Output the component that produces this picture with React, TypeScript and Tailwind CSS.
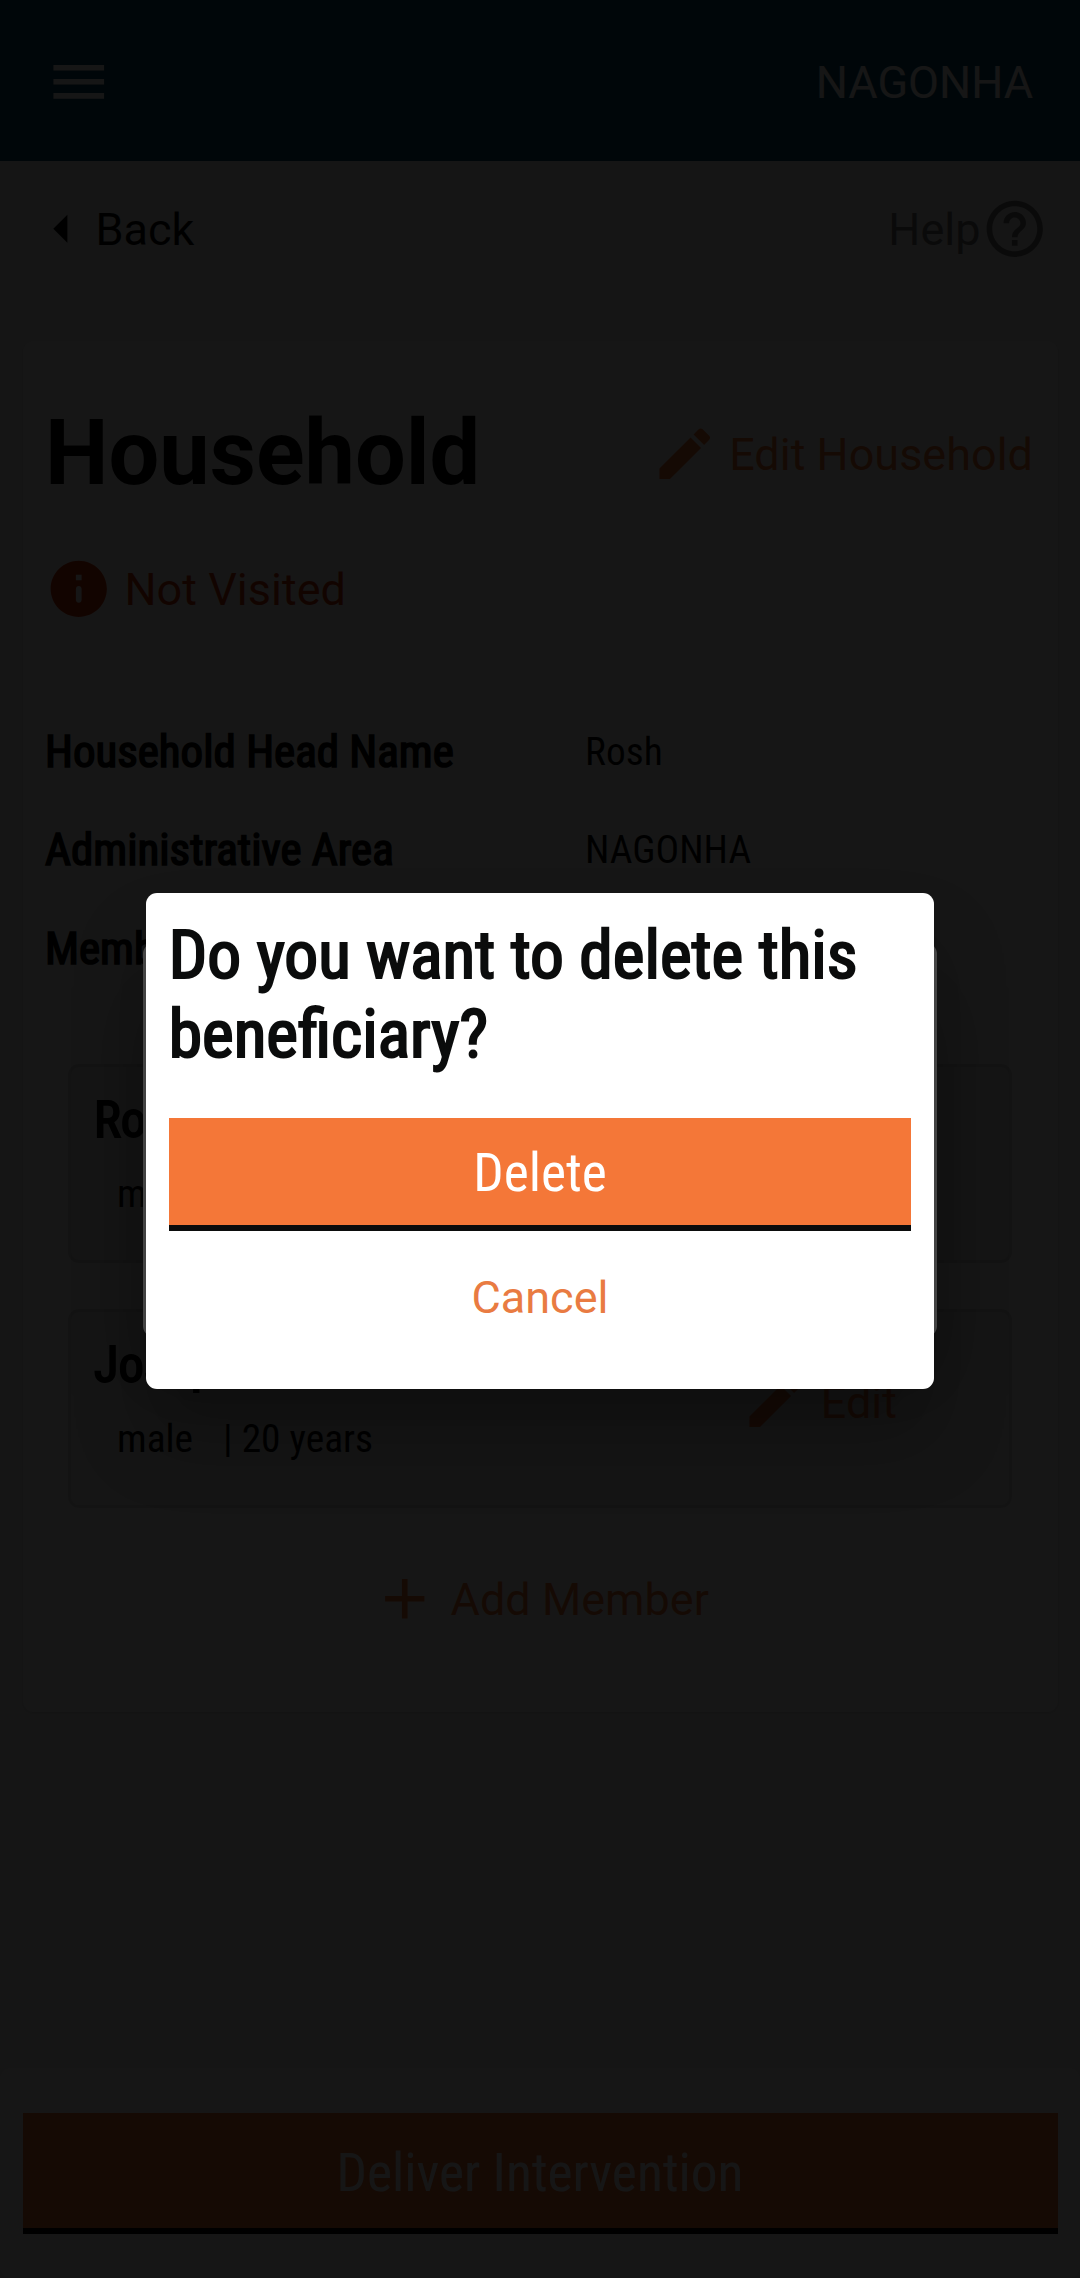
import type { ReactNode } from "react";

const ICONS = {
  menu: "M3 18h18v-2H3v2zm0-5h18v-2H3v2zm0-7v2h18V6H3z",
  back: "M14 7l-5 5 5 5V7z",
  help: "M11 18h2v-2h-2v2zm1-16C6.48 2 2 6.48 2 12s4.48 10 10 10 10-4.48 10-10S17.52 2 12 2zm0 18c-4.41 0-8-3.59-8-8s3.59-8 8-8 8 3.59 8 8-3.59 8-8 8zm0-14c-2.21 0-4 1.79-4 4h2c0-1.1.9-2 2-2s2 .9 2 2c0 2-3 1.75-3 5h2c0-2.25 3-2.5 3-5 0-2.21-1.79-4-4-4z",
  edit: "M3 17.25V21h3.75L17.81 9.94l-3.75-3.75L3 17.25zM20.71 7.04c.39-.39.39-1.02 0-1.41l-2.34-2.34c-.39-.39-1.02-.39-1.41 0l-1.83 1.83 3.75 3.75 1.83-1.83z",
  info: "M12 2C6.48 2 2 6.48 2 12s4.48 10 10 10 10-4.48 10-10S17.52 2 12 2zm0 15c-.55 0-1-.45-1-1v-4c0-.55.45-1 1-1s1 .45 1 1v4c0 .55-.45 1-1 1zm1-8h-2V7h2v2z",
  add: "M19 13h-6v6h-2v-6H5v-2h6V5h2v6h6v2z",
};

function Icon({ name, className = "" }: { name: keyof typeof ICONS; className?: string }) {
  return (
    <svg viewBox="0 0 24 24" fill="currentColor" className={`size-[67.5px] shrink-0 ${className}`}>
      <path d={ICONS[name]} />
    </svg>
  );
}

function DetailRow({ label, value }: { label: string; value?: string }) {
  return (
    <div className="grid h-[98.5px] grid-cols-2 items-center font-['Roboto_Condensed']">
      <span className="text-[45px] [-webkit-text-stroke:1.7px_#0b0c0c]">{label}</span>
      <span className="pl-[45px] text-[39.4px]">{value}</span>
    </div>
  );
}

function MemberCard({ name, gender, age }: { name: string; gender: string; age: string }) {
  return (
    <div className="flex h-[199px] justify-between rounded-[11px] border-[3px] border-[#dedede] bg-[#f0f0f0] pr-[112px] pl-[23px] font-['Roboto_Condensed']">
      <div className="pt-[23px]">
        <div className="text-[50.6px] leading-[60px] [-webkit-text-stroke:1.9px_#0b0c0c]">{name}</div>
        <div className="mt-[21px] flex pl-[23px] text-[39.4px] leading-[46px]">
          <span className="w-[106px]">{gender}</span>
          <span>| {age}</span>
        </div>
      </div>
      <div className="mt-[56px] flex h-[68px] items-center gap-[12px] font-['Roboto'] text-[45px] text-[#f47738]">
        <Icon name="edit" />
        <span>Edit</span>
      </div>
    </div>
  );
}

function PrimaryButton({ children, className }: { children: ReactNode; className: string }) {
  return (
    <button
      className={`flex w-full items-center justify-center border-b-[6px] border-[#0b0c0c] bg-[#f47738] font-['Roboto_Condensed'] text-[53.4px] leading-none text-white ${className}`}
    >
      {children}
    </button>
  );
}

const DIALOG = "absolute rounded-[11px] bg-white shadow-[0_50px_75px_0_rgba(0,0,0,0.22)]";

export default function App() {
  return (
    <div className="relative flex h-[2278px] w-[1080px] flex-col overflow-hidden bg-[#eeeeee] font-['Roboto'] text-[45px] leading-[53px] text-[#0b0c0c]">
      <header className="flex h-[161px] shrink-0 items-center justify-between bg-[#0b4b66] pt-[3px] pr-[47px] pl-[45px] text-white">
        <Icon name="menu" />
        <span>NAGONHA</span>
      </header>

      <nav className="flex h-[136px] shrink-0 items-center justify-between pr-[32px] pl-[28px]">
        <div className="flex items-center">
          <Icon name="back" />
          <span>Back</span>
        </div>
        <div className="flex items-center text-[#787878]">
          <span>Help</span>
          <Icon name="help" />
        </div>
      </nav>

      <main className="mx-[22.5px] mt-[44px] flex h-[1370.5px] shrink-0 flex-col rounded-[11px] bg-white px-[22.5px] pt-[79px] shadow-[0_1px_3px_rgba(0,0,0,0.12)]">
        <div className="flex h-[68px] items-center justify-between">
          <h1 className="text-[90px] leading-none font-bold">Household</h1>
          <div className="flex items-center gap-[11px] pr-[2px] text-[#f47738]">
            <Icon name="edit" />
            <span>Edit Household</span>
          </div>
        </div>
        <div className="mt-[67px] flex h-[68px] items-center gap-[12px] text-[#d4380d]">
          <Icon name="info" />
          <span>Not Visited</span>
        </div>
        <div className="mt-[79px]">
          <DetailRow label="Household Head Name" value="Rosh" />
          <DetailRow label="Administrative Area" value="NAGONHA" />
          <DetailRow label="Members" />
        </div>
        <div className="mx-[23px] mt-[66.5px] flex flex-col gap-[46px]">
          <MemberCard name="Rosh" gender="male" age="30 years" />
          <MemberCard name="Joseph" gender="male" age="20 years" />
        </div>
        <div className="mt-[57px] flex h-[68px] items-center justify-center gap-[12px] text-[#f47738]">
          <Icon name="add" />
          <span>Add Member</span>
        </div>
      </main>

      <footer className="mt-auto h-[210px] shrink-0 rounded-[11px] bg-white px-[22.5px] pt-[45px]">
        <PrimaryButton className="h-[121px] pt-[4px]">Deliver Intervention</PrimaryButton>
      </footer>

      <div className="absolute inset-0 bg-black/70" />
      <div className={`${DIALOG} top-[943px] left-[143.4px] h-[394px] w-[793.2px]`} />
      <div className="absolute inset-0 bg-black/70" />

      <div role="dialog" className={`${DIALOG} top-[893.2px] left-[146.25px] h-[495.4px] w-[787.5px] px-[22.5px] pt-[21.5px]`}>
        <h2 className="font-['Roboto_Condensed'] text-[67.5px] leading-[79.1px] [-webkit-text-stroke:2.2px_#0b0c0c]">
          Do you want to delete this beneficiary?
        </h2>
        <PrimaryButton className="mt-[45px] h-[113px] pt-[3px]">Delete</PrimaryButton>
        <button className="mt-[40px] block w-full text-center leading-[53px] text-[#e97b42]">Cancel</button>
      </div>
    </div>
  );
}
